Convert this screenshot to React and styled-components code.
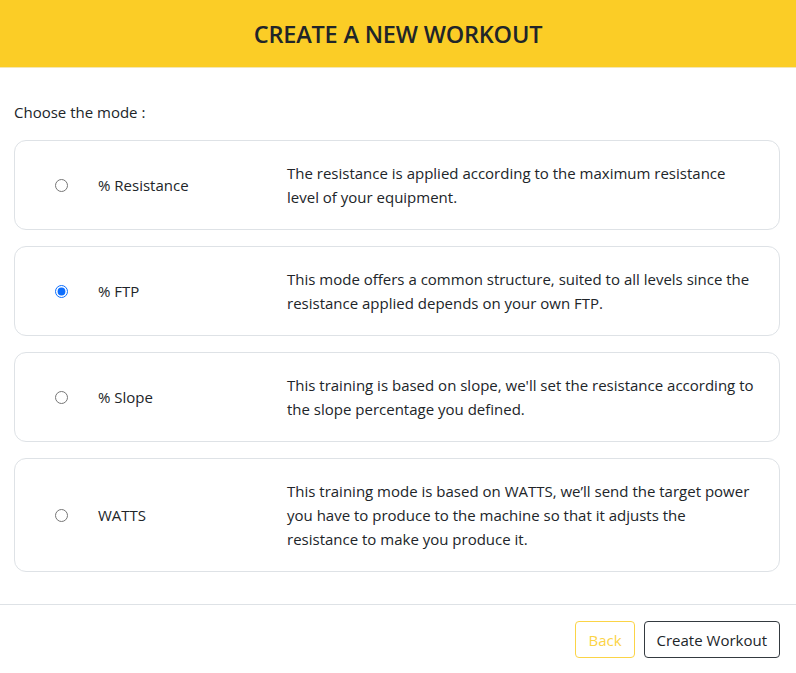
import React, { useState } from "react";
import styled, { createGlobalStyle } from "styled-components";

const GlobalStyle = createGlobalStyle`
    * { box-sizing: border-box; }
    body {
        margin: 0;
        font-family: "Open Sans", "Noto Sans", sans-serif;
        color: #212529;
        background: #fff;
    }
`;

const modes = [
    {
        id: "resistance",
        label: "% Resistance",
        text: "The resistance is applied according to the maximum resistance level of your equipment.",
    },
    {
        id: "ftp",
        label: "% FTP",
        text: "This mode offers a common structure, suited to all levels since the resistance applied depends on your own FTP.",
    },
    {
        id: "slope",
        label: "% Slope",
        text: "This training is based on slope, we'll set the resistance according to the slope percentage you defined.",
    },
    {
        id: "watts",
        label: "WATTS",
        text: "This training mode is based on WATTS, we\u2019ll send the target power you have to produce to the machine so that it adjusts the resistance to make you produce it.",
    },
];

const Page = styled.div`
    width: 796px;
    min-height: 673px;
    display: flex;
    flex-direction: column;
`;

const Header = styled.header`
    height: 68px;
    background: #fbcd26;
    display: flex;
    align-items: center;
    justify-content: center;
    border-bottom: 1px solid #f3e7b5;

    h1 {
        margin: 0;
        font-size: 23.5px;
        font-weight: 600;
        letter-spacing: -0.2px;
        color: #212529;
    }
`;

const Body = styled.main`
    padding: 32px 16px 32px 14px;
`;

const Intro = styled.p`
    margin: 0 0 16px;
    font-size: 15px;
    line-height: 24px;
`;

const ModeList = styled.div`
    display: flex;
    flex-direction: column;
    gap: 16px;
`;

const ModeCard = styled.label`
    display: grid;
    grid-template-columns: 83px 189px 1fr;
    align-items: center;
    padding: 20px 20px 20px 0;
    border: 1px solid #dee2e6;
    border-radius: 12px;
    cursor: pointer;
`;

const Radio = styled.input`
    margin: 0 0 0 40px;
    width: 13px;
    height: 13px;
    accent-color: #0d6efd;
`;

const ModeName = styled.span`
    font-size: 15px;
    line-height: 24px;
`;

const ModeText = styled.span`
    font-size: 15px;
    line-height: 24px;
`;

const Footer = styled.footer`
    border-top: 1px solid #dee2e6;
    padding: 16px 16px 14px;
    display: flex;
    justify-content: flex-end;
    gap: 9px;
`;

const Button = styled.button`
    height: 37px;
    padding: 0 12px;
    font-family: inherit;
    font-size: 15px;
    background: #fff;
    border-radius: 4px;
    border: 1px solid ${(p) => (p.$variant === "warning" ? "#fbcd26" : "#343a40")};
    color: ${(p) => (p.$variant === "warning" ? "#fbcd26" : "#212529")};
    opacity: ${(p) => (p.disabled ? 0.85 : 1)};
    cursor: pointer;
`;

export default function App() {
    const [mode, setMode] = useState("ftp");

    return (
        <Page>
            <GlobalStyle />
            <Header>
                <h1>CREATE A NEW WORKOUT</h1>
            </Header>
            <Body>
                <Intro>Choose the mode :</Intro>
                <ModeList>
                    {modes.map((m) => (
                        <ModeCard key={m.id}>
                            <Radio
                                type="radio"
                                name="mode"
                                checked={mode === m.id}
                                onChange={() => setMode(m.id)}
                            />
                            <ModeName>{m.label}</ModeName>
                            <ModeText>{m.text}</ModeText>
                        </ModeCard>
                    ))}
                </ModeList>
            </Body>
            <Footer>
                <Button $variant="warning" disabled>Back</Button>
                <Button>Create Workout</Button>
            </Footer>
        </Page>
    );
}
